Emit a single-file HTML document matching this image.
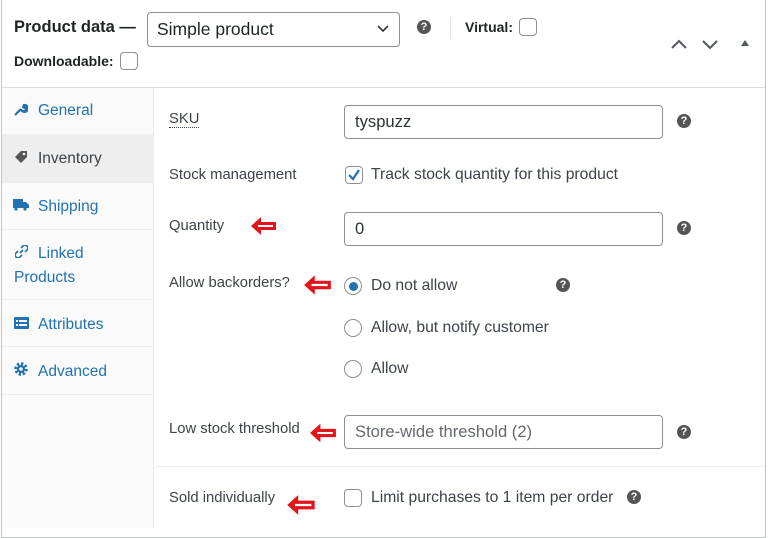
<!DOCTYPE html>
<html><head><meta charset="utf-8">
<style>
*{box-sizing:border-box;margin:0;padding:0}
body{width:768px;height:527px;overflow:hidden;background:#fff;font-family:"Liberation Sans",Arial,sans-serif;position:relative;color:#1d2327}
.a{position:absolute}
.box{left:1px;top:-2px;width:765px;height:540px;border:1px solid #c3c4c7}
.hdr{left:2px;top:87px;width:763px;height:1px;background:#dcdcde}
.side{left:2px;top:88px;width:152px;height:440px;background:#fafafa;border-right:1px solid #eee}
.tab{position:absolute;left:0;width:152px;border-bottom:1px solid #eee;color:#2271b1;font-size:15.5px}
.tab span{position:absolute;left:36px}
.lbl{font-size:14.8px;color:#3c434a}
.inp{border:1px solid #8c8f94;border-radius:4px;background:#fff;font-size:16.6px;color:#2c3338;padding-left:10px;line-height:32px;height:34px}
.help{width:14px;height:14px;border-radius:50%;background:#555;color:#fff;font-size:11px;font-weight:bold;text-align:center;line-height:14px}
.cb{width:18px;height:18px;border:1px solid #8c8f94;border-radius:4px;background:#fff}
.rd{width:18px;height:18px;border:1px solid #8c8f94;border-radius:50%;background:#fff}
.opt{font-size:15.7px;color:#3c434a}
</style></head><body>
<div class="a box"></div>
<div class="a" style="left:14px;top:18px;font-size:16.5px;font-weight:bold;color:#1d2327">Product data —</div>
<div class="a" style="left:147px;top:12px;width:253px;height:35px;border:1px solid #8c8f94;border-radius:4px;font-size:17.5px;line-height:33px;padding-left:9px;color:#1d2327">Simple product</div>
<svg class="a" style="left:377px;top:24px" width="12" height="10" viewBox="0 0 12 10"><path d="M1 2 L6 7 L11 2" fill="none" stroke="#333" stroke-width="1.6"/></svg>
<div class="a help" style="left:417px;top:20px">?</div>
<div class="a" style="left:450px;top:17px;width:1px;height:22px;background:#e5e5e5"></div>
<div class="a" style="left:465px;top:19px;font-size:14px;font-weight:bold">Virtual:</div>
<div class="a cb" style="left:519px;top:18px"></div>
<div class="a" style="left:14px;top:53px;font-size:14px;font-weight:bold">Downloadable:</div>
<div class="a cb" style="left:120px;top:52px"></div>
<svg class="a" style="left:670px;top:37px" width="90" height="14" viewBox="0 0 90 14"><path d="M2 11 L9 4 L16 11" fill="none" stroke="#50575e" stroke-width="2"/><path d="M33 4 L40 11 L47 4" fill="none" stroke="#50575e" stroke-width="2"/><path d="M71 9 L75 3 L79 9Z" fill="#50575e"/></svg>
<div class="a hdr"></div>
<div class="a side">
 <div class="tab" style="top:0;height:47px"><svg class="a" style="left:12px;top:15px" width="14" height="14" viewBox="0 0 14 14"><path d="M1 12 L7 6 M7 6 A3.5 3.5 0 1 0 10 2 L9 4 L11 5 L12.5 3.5 A3.5 3.5 0 0 1 8 8" fill="#2271b1" stroke="#2271b1" stroke-width="2.2"/></svg><span style="top:14px">General</span></div>
 <div class="tab" style="top:47px;height:48px;background:#eee;color:#3c434a"><svg class="a" style="left:12px;top:15px" width="15" height="14" viewBox="0 0 15 14"><path d="M1 7 L7 1 L13 1 L13 7 L7 13Z" fill="#555"/><circle cx="10" cy="4" r="1.3" fill="#eee"/></svg><span style="top:15px">Inventory</span></div>
 <div class="tab" style="top:95px;height:47px"><svg class="a" style="left:11px;top:16px" width="16" height="12" viewBox="0 0 16 12"><rect x="0" y="0" width="10" height="9" fill="#2271b1"/><path d="M10 3 H13 L16 6 V9 H10Z" fill="#2271b1"/><circle cx="3" cy="10" r="1.6" fill="#2271b1"/><circle cx="12" cy="10" r="1.6" fill="#2271b1"/></svg><span style="top:15px">Shipping</span></div>
 <div class="tab" style="top:142px;height:70px"><svg class="a" style="left:13px;top:15px" width="13" height="13" viewBox="0 0 13 13"><path d="M5 8 L8 5 M6 3 L8 1 A2.5 2.5 0 0 1 12 5 L10 7 M7 10 L5 12 A2.5 2.5 0 0 1 1 8 L3 6" fill="none" stroke="#2271b1" stroke-width="1.6"/></svg><span style="top:15px">Linked</span><span style="top:39px;left:12px">Products</span></div>
 <div class="tab" style="top:212px;height:47px"><svg class="a" style="left:12px;top:17px" width="15" height="12" viewBox="0 0 15 12"><rect width="15" height="12" rx="1" fill="#2271b1"/><rect x="2" y="3" width="2" height="2" fill="#fff"/><rect x="5" y="3" width="8" height="2" fill="#fff"/><rect x="2" y="7" width="2" height="2" fill="#fff"/><rect x="5" y="7" width="8" height="2" fill="#fff"/></svg><span style="top:16px">Attributes</span></div>
 <div class="tab" style="top:259px;height:48px"><svg class="a" style="left:12px;top:15px" width="14" height="14" viewBox="0 0 14 14"><circle cx="7" cy="7" r="5" fill="none" stroke="#2271b1" stroke-width="3.5" stroke-dasharray="2.2 1.7"/><circle cx="7" cy="7" r="4" fill="#2271b1"/><circle cx="7" cy="7" r="1.8" fill="#fafafa"/></svg><span style="top:16px">Advanced</span></div>
</div>

<div class="a lbl" style="left:169px;top:111px;border-bottom:1px dotted #3c434a;line-height:16px">SKU</div>
<div class="a inp" style="left:344px;top:105px;width:319px">tyspuzz</div>
<div class="a help" style="left:677px;top:114px">?</div>

<div class="a lbl" style="left:169px;top:167px">Stock management</div>
<div class="a cb" style="left:345px;top:166px"><svg width="16" height="16" viewBox="0 0 16 16"><path d="M3 8 L7 12 L13 3" fill="none" stroke="#2271b1" stroke-width="2.2"/></svg></div>
<div class="a opt" style="left:371px;top:166px">Track stock quantity for this product</div>

<div class="a lbl" style="left:169px;top:218px">Quantity</div>
<div class="a inp" style="left:344px;top:212px;width:319px">0</div>
<div class="a help" style="left:677px;top:221px">?</div>

<div class="a lbl" style="left:169px;top:275px">Allow backorders?</div>
<div class="a rd" style="left:344px;top:277px"><div style="margin:3.5px;width:9px;height:9px;border-radius:50%;background:#2271b1"></div></div>
<div class="a opt" style="left:371px;top:277px">Do not allow</div>
<div class="a help" style="left:556px;top:278px">?</div>
<div class="a rd" style="left:344px;top:319px"></div>
<div class="a opt" style="left:371px;top:319px">Allow, but notify customer</div>
<div class="a rd" style="left:344px;top:360px"></div>
<div class="a opt" style="left:371px;top:360px">Allow</div>

<div class="a lbl" style="left:169px;top:421px">Low stock threshold</div>
<div class="a inp" style="left:344px;top:415px;width:319px;color:#646970">Store-wide threshold (2)</div>
<div class="a help" style="left:677px;top:425px">?</div>

<div class="a" style="left:155px;top:466px;width:610px;height:1px;background:#eee"></div>
<div class="a lbl" style="left:169px;top:490px">Sold individually</div>
<div class="a cb" style="left:344px;top:489px"></div>
<div class="a opt" style="left:371px;top:489px">Limit purchases to 1 item per order</div>
<div class="a help" style="left:627px;top:490px">?</div>

<svg class="a" style="left:250px;top:216px" width="28" height="20" viewBox="0 0 28 20"><path d="M1 10 L11 1 V6 H26 V14 H11 V19Z" fill="#e3151a"/><path d="M8 10 H23" stroke="#fff" stroke-width="2"/></svg>
<svg class="a" style="left:303px;top:274px" width="30" height="22" viewBox="0 0 28 20"><path d="M1 10 L11 1 V6 H26 V14 H11 V19Z" fill="#e3151a"/><path d="M8 10 H23" stroke="#fff" stroke-width="2"/></svg>
<svg class="a" style="left:309px;top:422px" width="29" height="22" viewBox="0 0 28 20"><path d="M1 10 L11 1 V6 H26 V14 H11 V19Z" fill="#e3151a"/><path d="M8 10 H23" stroke="#fff" stroke-width="2"/></svg>
<svg class="a" style="left:286px;top:494px" width="31" height="22" viewBox="0 0 28 20"><path d="M1 10 L11 1 V6 H26 V14 H11 V19Z" fill="#e3151a"/><path d="M8 10 H23" stroke="#fff" stroke-width="2"/></svg>
</body></html>
